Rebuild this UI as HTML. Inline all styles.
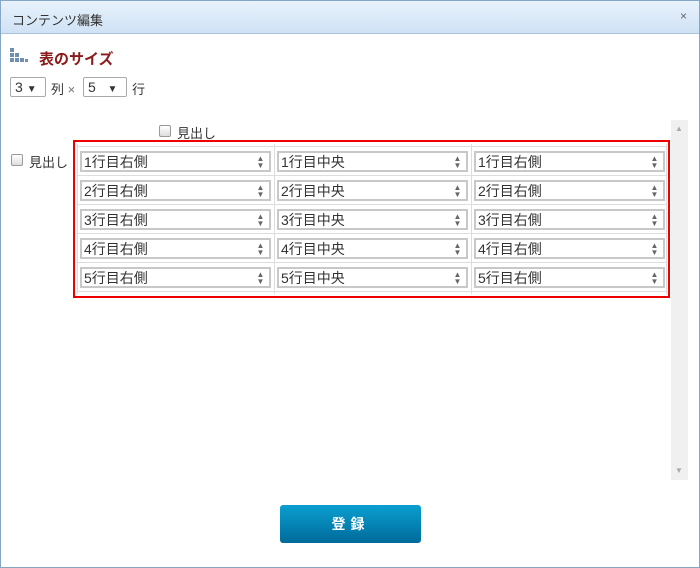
<!DOCTYPE html><html><head><meta charset="utf-8"><style>
*{box-sizing:border-box;margin:0;padding:0}
body{width:700px;height:568px;position:relative;background:#fff;font-family:"Liberation Sans","Noto Sans CJK JP",sans-serif;font-size:13px;color:#333;overflow:hidden}
.frame{position:absolute;left:0;top:0;width:700px;height:568px;border:1px solid #86a6c6}
.title{position:absolute;left:1px;top:1px;width:698px;height:33px;background:linear-gradient(#e8f2fc,#cfe2f5);border-bottom:1px solid #a9c3dd;font-size:13px;padding:9px 0 0 11px;color:#333}
.x{position:absolute;right:12px;top:8px;font-size:12px;color:#666}
.abs{position:absolute}
.sel{position:absolute;height:20px;border:1px solid #aaa;border-radius:2px;padding:1px 0 0 4px;font-size:14px;background:#fff}
.cb{position:absolute;width:12px;height:12px;border:1px solid #999;border-radius:2px;background:linear-gradient(#fff,#ddd)}
.red{position:absolute;left:73px;top:140px;width:597px;height:158px;border:2px solid #e00}
.in{position:absolute;width:191px;height:21px;border:2px solid #c8c8c8;background:#fff;font-size:14px;padding:0 0 0 2px;line-height:19px;color:#333}
.sp{position:absolute;right:4px;top:2px;width:9px;font-size:8px;line-height:7px;color:#666;text-align:center}
.hl{position:absolute;left:77px;width:589px;height:1px;background:#ddd}
.vl{position:absolute;top:144px;width:1px;height:150px;background:#ddd}
.btn{position:absolute;left:280px;top:505px;width:141px;height:38px;border-radius:3px;background:linear-gradient(#0a9fd0,#006a9a);color:#fff;font-size:14px;font-weight:bold;text-align:center;line-height:38px;letter-spacing:5px}
</style></head><body>
<div class="frame"></div>
<div class="title">コンテンツ編集<span class="x">×</span></div>
<svg class="abs" style="left:10px;top:48px" width="20" height="18"><g fill="#6f8fb0"><rect x="0" y="0" width="4" height="4"/><rect x="0" y="5" width="4" height="4"/><rect x="5" y="5" width="4" height="4"/><rect x="0" y="10" width="4" height="4"/><rect x="5" y="10" width="4" height="4"/><rect x="10" y="10" width="4" height="4"/><rect x="15" y="11" width="3" height="3"/></g></svg>
<div class="abs" style="left:39px;top:48px;font-size:15px;font-weight:bold;color:#8b1a1a">表のサイズ</div>
<div class="sel" style="left:10px;top:77px;width:36px">3 <span style="font-size:10px">▼</span></div>
<div class="abs" style="left:51px;top:79px;font-size:13px">列 <span style="color:#777">×</span></div>
<div class="sel" style="left:83px;top:77px;width:44px">5 &nbsp;&nbsp;<span style="font-size:10px">▼</span></div>
<div class="abs" style="left:132px;top:79px">行</div>
<div class="cb" style="left:159px;top:125px"></div><div class="abs" style="left:177px;top:123px">見出し</div>
<div class="cb" style="left:11px;top:154px"></div><div class="abs" style="left:29px;top:152px">見出し</div>
<div class="abs" style="left:671px;top:120px;width:17px;height:360px;background:#f0f0f0"></div>
<div class="abs" style="left:675px;top:124px;font-size:8px;color:#aaa">▲</div>
<div class="abs" style="left:675px;top:466px;font-size:8px;color:#aaa">▼</div>
<div class="red"></div>
<div id="g"></div>
<script>
var t=["右側","中央","右側"],xs=[80,277,474],h="";
for(var r=0;r<6;r++)h+='<div class="hl" style="top:'+(146+r*29)+'px"></div>';
[77,274,471,666].forEach(function(x){h+='<div class="vl" style="left:'+x+'px"></div>';});
for(var r=0;r<5;r++)for(var c=0;c<3;c++){h+='<div class="in" style="left:'+xs[c]+'px;top:'+(151+r*29)+'px">'+(r+1)+'行目'+t[c]+'<span class="sp">▲<br>▼</span></div>';}
document.getElementById("g").innerHTML=h;
</script>
<div class="btn">登録</div>
</body></html>
